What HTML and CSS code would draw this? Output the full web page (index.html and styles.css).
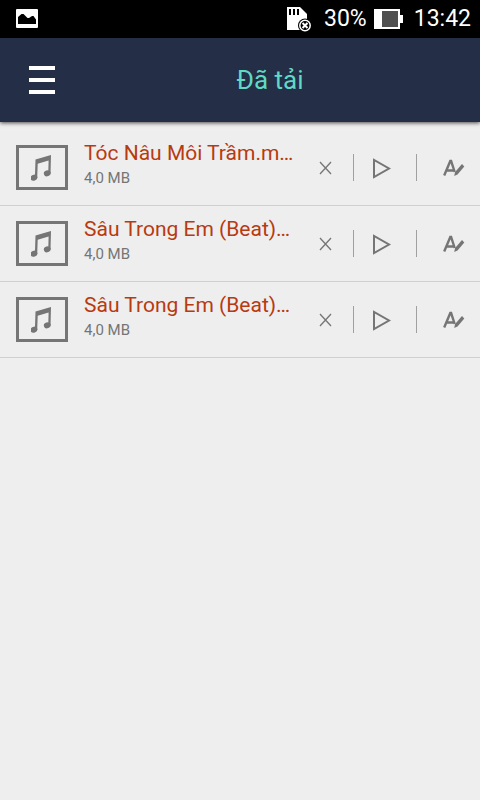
FILE: index.html
```html
<!DOCTYPE html>
<html lang="vi">
<head>
<meta charset="utf-8">
<meta name="viewport" content="width=device-width, initial-scale=1">
<title>Đã tải</title>
<link rel="stylesheet" href="styles.css">
</head>
<body>
<svg class="sprite" width="0" height="0" aria-hidden="true">
  <symbol id="note" viewBox="0 0 22 27">
    <path d="M4.500 5.500 20 1 19.500 19H17.300L17.600 6.500 6.700 9.700 6.200 24H3.900z"/>
    <ellipse cx="2.900" cy="23.700" rx="3.500" ry="2.900" transform="rotate(-20 2.900 23.700)"/>
    <ellipse cx="16.300" cy="19.300" rx="3.500" ry="2.900" transform="rotate(-20 16.300 19.300)"/>
  </symbol>
  <symbol id="cross" viewBox="0 0 54 27">
    <path class="line thin" d="M21 8 32 20M32 8 21 20"/>
  </symbol>
  <symbol id="play" viewBox="0 0 62 27">
    <path class="line" d="M20 6v17L35 14.500z"/>
  </symbol>
  <symbol id="rename" viewBox="0 0 63 27">
    <path class="line heavy" d="M27.200 21.500 33.300 7h.8l3.600 11M30 16.500h7"/>
    <path d="M45 10 47.300 12.500 40.500 20.500 37.200 22 38.100 18z"/>
  </symbol>
</svg>

<div class="status">
  <svg class="status-picture" width="23" height="20" viewBox="0 0 23 20" aria-hidden="true">
    <path fill="#fff" d="M1 0h20q1 0 1 1v17q0 1-1 1H1q-1 0-1-1V1q0-1 1-1z"/>
    <path d="M2 15V8L5.500 5h2l4 4h1.500l3-2h1.500L20 10.500V15z"/>
  </svg>
  <svg class="status-card" width="25" height="25" viewBox="0 0 25 25" aria-hidden="true">
    <path fill="#fff" d="M0 0h13l7 7v16H0z"/>
    <path d="M2 2h2v6H2zM6 2h2v6H6zM10 2h2v6h-2z"/>
    <circle cx="18" cy="18.500" r="7"/>
    <circle cx="18" cy="18.500" r="5.200" stroke="#fff" stroke-width="1.500"/>
    <path stroke="#fff" stroke-width="2" d="m15.500 16 5 5m0-5-5 5"/>
  </svg>
  <span class="status-charge">30%</span>
  <svg class="status-battery" width="29" height="20" viewBox="0 0 29 20" aria-hidden="true">
    <path fill="#fff" d="M0 0h26v6h3v8h-3v6H0z"/>
    <path fill="#505050" d="M8 2h16v16H8z"/>
  </svg>
  <time>13:42</time>
</div>

<header class="bar">
  <button class="menu" type="button" aria-label="Menu"><span></span><span></span><span></span></button>
  <h1>Đã tải</h1>
</header>

<main>
  <ul class="tracks">
    <li class="track">
      <span class="thumb"><svg width="22" height="27"><use href="#note"/></svg></span>
      <div class="info"><h2>Tóc Nâu Môi Trầm.m…</h2><p>4,0 MB</p></div>
      <div class="actions">
        <button type="button" aria-label="Xóa"><svg width="54" height="27"><use href="#cross"/></svg></button>
        <button type="button" aria-label="Phát"><svg width="62" height="27"><use href="#play"/></svg></button>
        <button type="button" aria-label="Đổi tên"><svg width="63" height="27"><use href="#rename"/></svg></button>
      </div>
    </li>
    <li class="track">
      <span class="thumb"><svg width="22" height="27"><use href="#note"/></svg></span>
      <div class="info"><h2>Sâu Trong Em (Beat)…</h2><p>4,0 MB</p></div>
      <div class="actions">
        <button type="button" aria-label="Xóa"><svg width="54" height="27"><use href="#cross"/></svg></button>
        <button type="button" aria-label="Phát"><svg width="62" height="27"><use href="#play"/></svg></button>
        <button type="button" aria-label="Đổi tên"><svg width="63" height="27"><use href="#rename"/></svg></button>
      </div>
    </li>
    <li class="track">
      <span class="thumb"><svg width="22" height="27"><use href="#note"/></svg></span>
      <div class="info"><h2>Sâu Trong Em (Beat)…</h2><p>4,0 MB</p></div>
      <div class="actions">
        <button type="button" aria-label="Xóa"><svg width="54" height="27"><use href="#cross"/></svg></button>
        <button type="button" aria-label="Phát"><svg width="62" height="27"><use href="#play"/></svg></button>
        <button type="button" aria-label="Đổi tên"><svg width="63" height="27"><use href="#rename"/></svg></button>
      </div>
    </li>
  </ul>
</main>
</body>
</html>
```

FILE: styles.css
```css
* {
  box-sizing: border-box;
}

body {
  margin: 0;
  background: #eee;
  color: #757575;
  font-family: Roboto, "Noto Sans", sans-serif;
}

h1, h2, p, ul {
  margin: 0;
  padding: 0;
  font-weight: 400;
}

button {
  padding: 0;
  border: 0;
  background: none;
  color: inherit;
  cursor: pointer;
}

svg {
  display: block;
  fill: currentColor;
}

.sprite {
  position: absolute;
}

.status {
  display: flex;
  align-items: center;
  height: 38px;
  padding: 0 9px 0 16px;
  background: #000;
  color: #fff;
  font-size: 23px;
  line-height: 38px;
}

.status svg {
  fill: #000;
}

.status-card {
  margin-left: auto;
}

.status-charge {
  margin-left: 12px;
}

.status-battery {
  margin: 0 11px 0 7px;
}

.bar {
  display: grid;
  grid-template-columns: 84px 1fr 84px;
  align-items: center;
  height: 84px;
  background: #242e47;
  box-shadow: 0 1px 4px rgba(0, 0, 0, 0.7);
}

.bar h1 {
  padding-left: 60px;
  color: #5fd9c4;
  font-size: 26px;
  line-height: 32px;
  text-align: center;
}

.menu {
  display: grid;
  gap: 8px;
  justify-content: center;
}

.menu span {
  width: 26px;
  height: 4px;
  background: #fff;
}

.tracks {
  padding-top: 8px;
  list-style: none;
}

.track {
  display: flex;
  align-items: center;
  height: 76px;
  padding-left: 16px;
  border-bottom: 1px solid #d0d0d0;
}

.thumb {
  display: grid;
  flex: none;
  place-items: center;
  width: 52px;
  height: 45px;
  border: 3px solid #757575;
}

.info {
  flex: 1;
  min-width: 0;
  padding: 0 0 8px 16px;
}

.info h2 {
  color: #b83a10;
  font-size: 21px;
  line-height: 28px;
  white-space: nowrap;
}

.info p {
  font-size: 15px;
  line-height: 22px;
}

.actions {
  display: flex;
  flex: none;
}

.actions button + button {
  border-left: 1px solid #a0a0a0;
}

.line {
  fill: none;
  stroke: currentColor;
  stroke-width: 2;
}

.thin {
  stroke-width: 1.3;
}

.heavy {
  stroke-width: 2.4;
}
```
